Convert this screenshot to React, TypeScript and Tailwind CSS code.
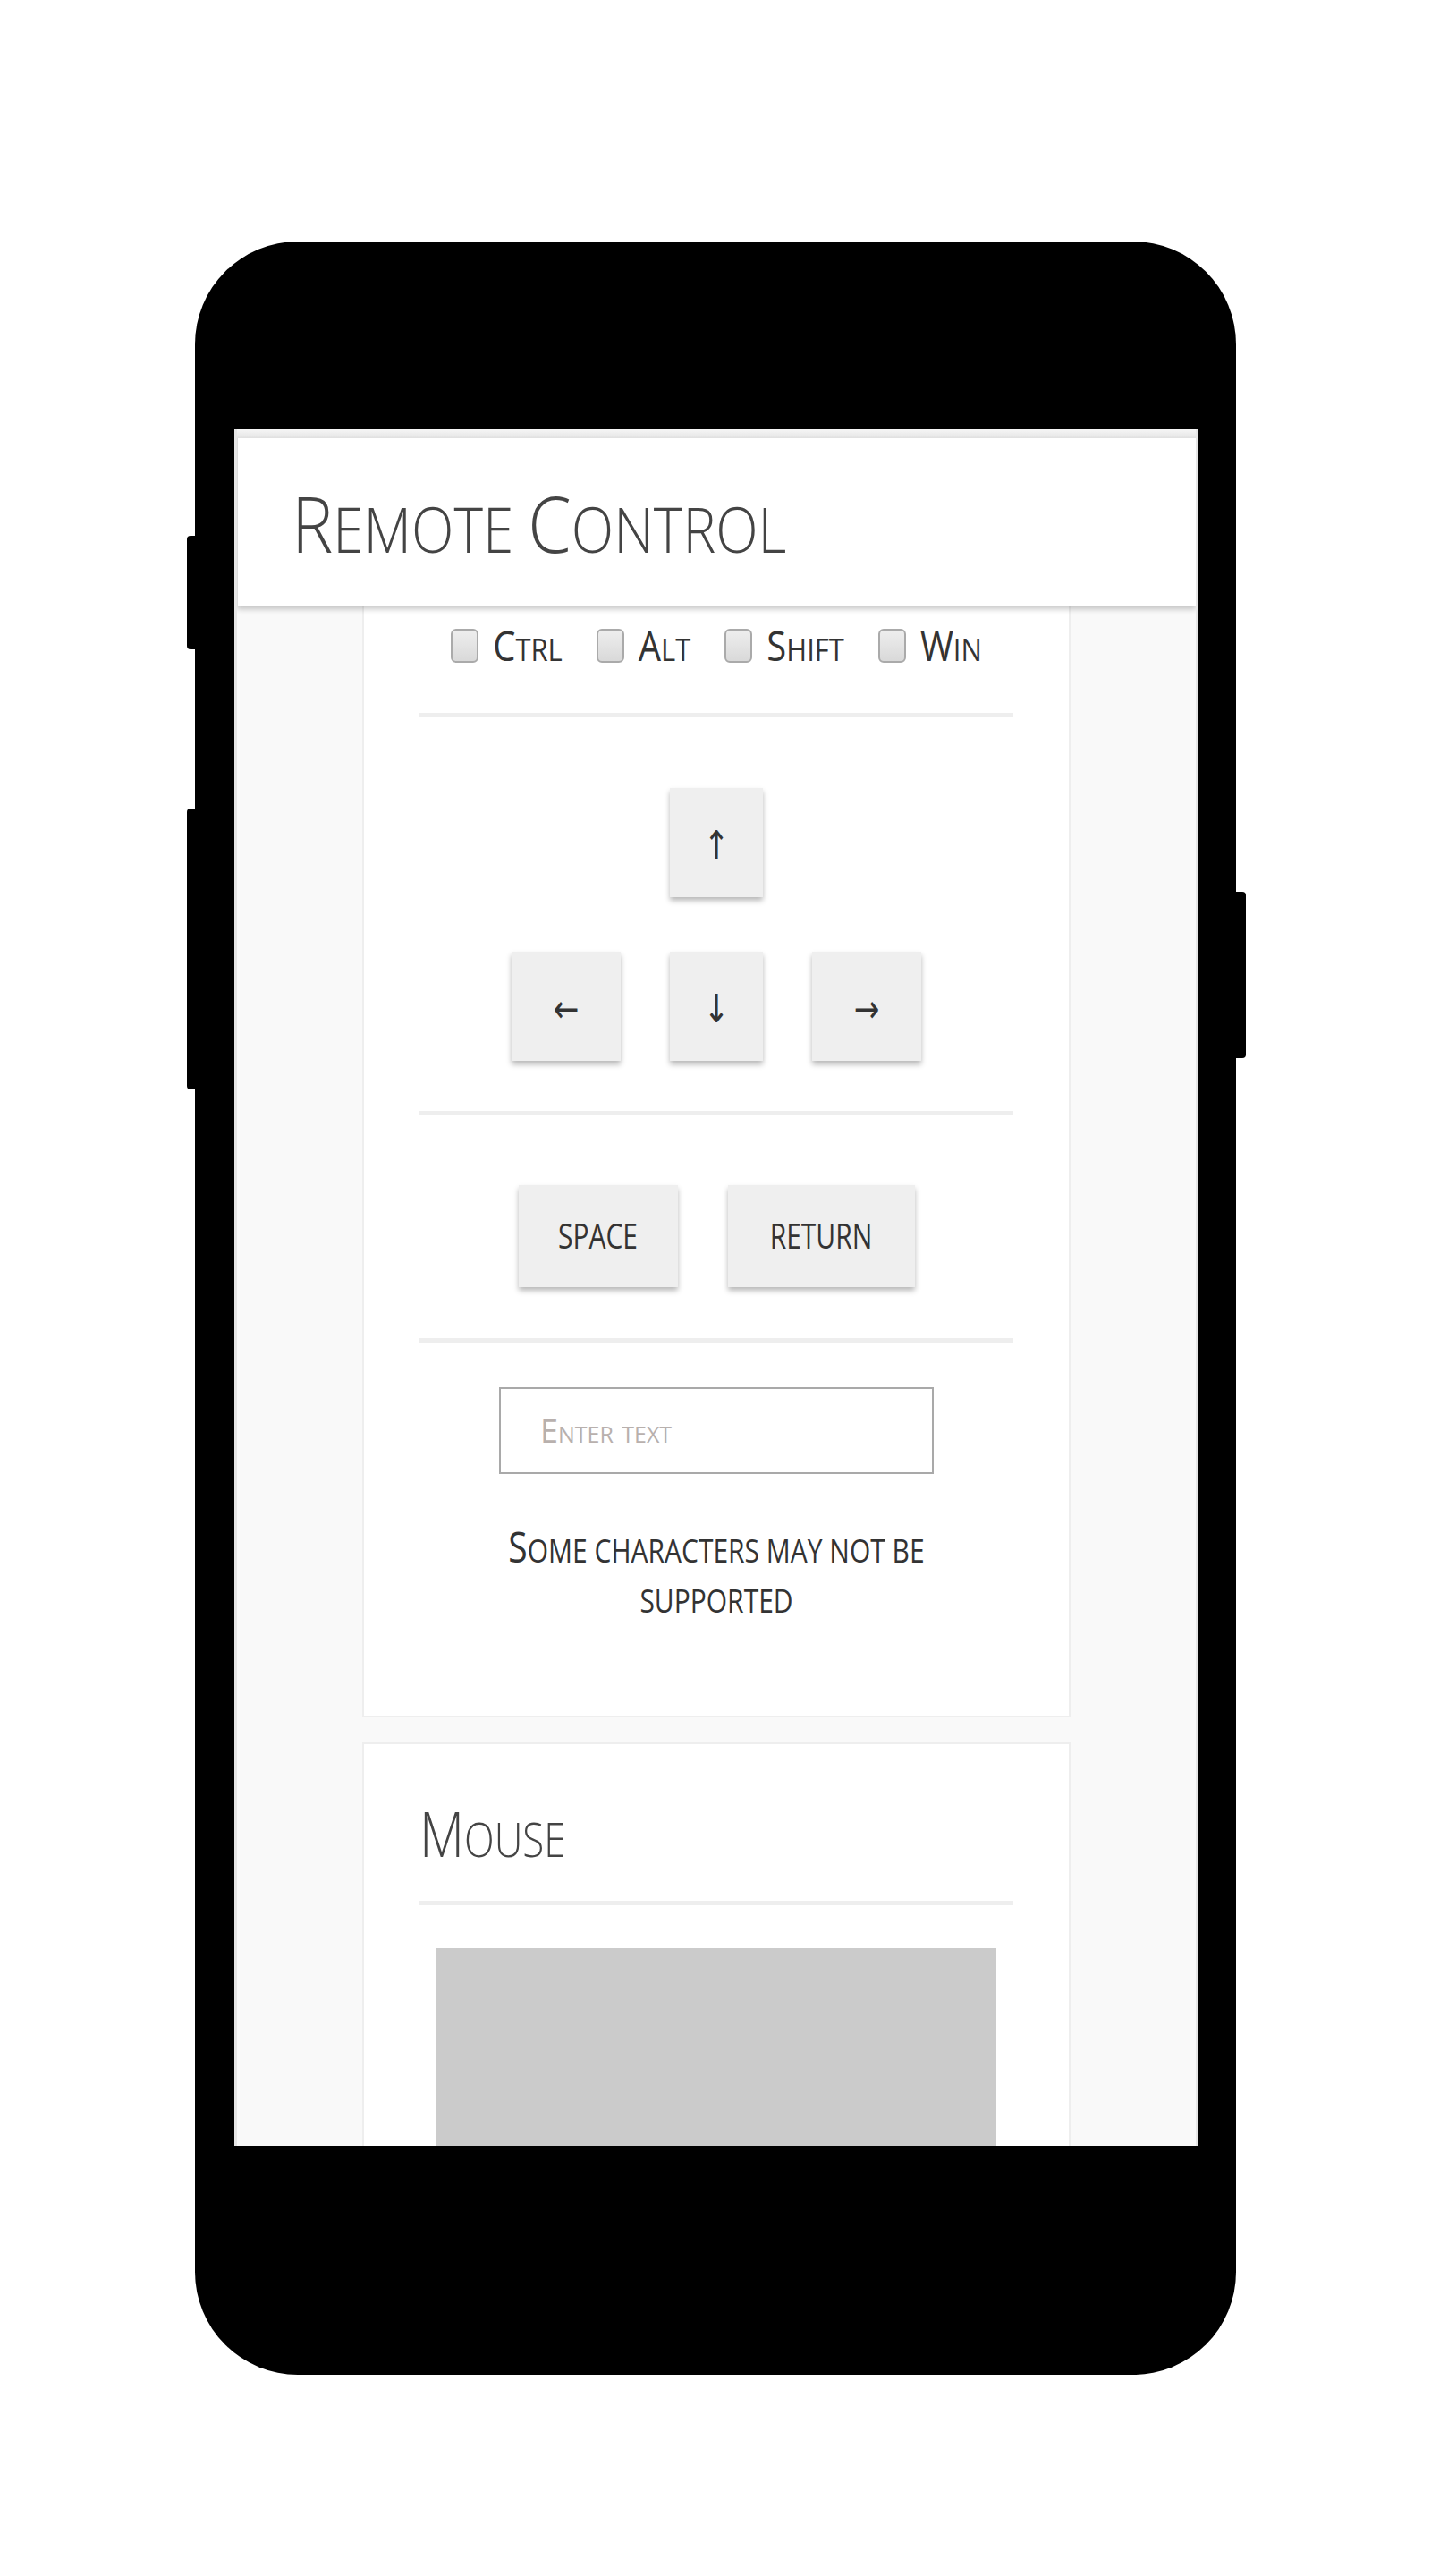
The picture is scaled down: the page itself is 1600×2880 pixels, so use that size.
import React from 'react';

// fake small caps: capitals keep the big size, everything else becomes smaller capitals.
// the mock-up screen is stretched a bit vertically, so the glyphs get a scale-y too.
const SC = ({ text, big, small, stretch }: { text: string; big: string; small: string; stretch: string }) => {
  const parts = text.match(/[A-Z]+|[^A-Z]+/g) ?? [];
  return (
    <span className={`inline-block whitespace-pre ${stretch}`}>
      {parts.map((p, i) =>
        /[A-Z]/.test(p[0]) ? (
          <span key={i} className={big}>{p}</span>
        ) : (
          <span key={i} className={small}>{p.toUpperCase()}</span>
        )
      )}
    </span>
  );
};

const SANS = "font-['Open_Sans',Roboto,sans-serif]";
const ARROW = "font-['DejaVu_Sans_Condensed','DejaVu_Sans',sans-serif]";

const Divider = () => <div className="h-[5px] bg-[#eeeeee]" />;

const Check = ({ label }: { label: string }) => (
  <label className="flex items-center gap-[16px] h-[38px]">
    <span className="w-[31px] h-[38px] rounded-[6px] border-2 border-[#aaaaaa] bg-linear-to-b from-[#eeeeee] to-[#d9d9d9]" />
    <span className={`${SANS} text-[#333] leading-none`}>
      <SC text={label} big="text-[40px]" small="text-[31px]" stretch="scale-y-[1.12]" />
    </span>
  </label>
);

const Key = ({ children, w }: { children: React.ReactNode; w: string }) => (
  <button className={`${w} h-[122px] flex items-center justify-center pt-[6px] bg-[#efefef] text-[#333] shadow-[0_4px_6px_rgba(0,0,0,0.28)]`}>
    <span className="inline-block scale-y-[1.15]">{children}</span>
  </button>
);

const Line = ({ text }: { text: string }) => (
  <div className="h-[61px] flex items-center justify-center leading-none">
    <SC text={text} big="text-[39px]" small="text-[30px]" stretch="scale-y-[1.2]" />
  </div>
);

export default function App() {
  return (
    <div className="min-h-[2880px] bg-white pt-[270px]">
      <div className="relative mx-auto w-[1164px] h-[2385px] bg-black rounded-[115px] pt-[210px] pl-[44px] pr-[42px]">
        {/* side buttons */}
        <div className="absolute left-[-9px] top-[329px] w-[9px] h-[127px] bg-black rounded-l-[4px]" />
        <div className="absolute left-[-9px] top-[634px] w-[9px] h-[314px] bg-black rounded-l-[4px]" />
        <div className="absolute right-[-11px] top-[727px] w-[11px] h-[186px] bg-black rounded-r-[4px]" />

        {/* screen */}
        <div className="h-[1919px] bg-[#f9f9f9] border-x-[3px] border-[#e6e6e6] overflow-hidden flex flex-col">
          <div className="h-[10px] bg-linear-to-b from-[#f6f6f6] to-[#e4e4e4] shrink-0" />
          <header className="relative z-10 h-[187px] shrink-0 bg-white border-l border-[#dddddd] shadow-[0_4px_6px_rgba(0,0,0,0.22)] flex items-center pl-[60px]">
            <h1 className={`${SANS} font-light text-[#444] leading-none`}>
              <SC text="Remote Control" big="text-[78px]" small="text-[62px]" stretch="scale-y-[1.12]" />
            </h1>
          </header>

          <div className="flex flex-col items-center gap-[28px]">
            {/* keyboard card */}
            <section className="w-[792px] -mt-[40px] bg-white border-2 border-[#eeeeee] px-[62px] pt-[64px] pb-[98px]">
              <div className="flex justify-center gap-[38px]">
                <Check label="Ctrl" />
                <Check label="Alt" />
                <Check label="Shift" />
                <Check label="Win" />
              </div>

              <div className="mt-[56px]">
                <Divider />
              </div>

              <div className={`${ARROW} text-[38px] leading-none flex flex-col items-center gap-[61px] pt-[79px] pb-[56px]`}>
                <Key w="w-[104px]">↑</Key>
                <div className="flex gap-[55px]">
                  <Key w="w-[122px]">←</Key>
                  <Key w="w-[104px]">↓</Key>
                  <Key w="w-[122px]">→</Key>
                </div>
              </div>

              <Divider />

              <div className={`${SANS} flex justify-center gap-[56px] pt-[78px] pb-[57px]`}>
                <button className="w-[178px] h-[114px] bg-[#efefef] text-[#333] text-[30px] leading-none shadow-[0_4px_6px_rgba(0,0,0,0.28)]">
                  <span className="inline-block scale-y-[1.25]">SPACE</span>
                </button>
                <button className="w-[209px] h-[114px] bg-[#efefef] text-[#333] text-[30px] leading-none shadow-[0_4px_6px_rgba(0,0,0,0.28)]">
                  <span className="inline-block scale-y-[1.25]">RETURN</span>
                </button>
              </div>

              <Divider />

              <div className="flex flex-col items-center pt-[50px]">
                <input
                  type="text"
                  placeholder="Enter text"
                  className={`${SANS} w-[486px] h-[97px] border-2 border-[#a9a9a9] pl-[44px] text-[36px] [font-variant:small-caps] text-[#333] placeholder:text-[#b8b0ad] outline-none`}
                />
                <div className={`${SANS} mt-[50px] text-[#333]`}>
                  <Line text="Some characters may not be" />
                  <Line text="supported" />
                </div>
              </div>
            </section>

            {/* mouse card */}
            <section className="w-[792px] bg-white border-2 border-[#eeeeee] px-[62px] pt-[62px] h-[600px]">
              <h2 className={`${SANS} font-light text-[#444] h-[73px] flex items-center leading-none`}>
                <SC text="Mouse" big="text-[58px]" small="text-[44px]" stretch="scale-y-[1.22]" />
              </h2>
              <div className="mt-[40px]">
                <Divider />
              </div>
              <div className="mx-[19px] mt-[48px] h-[400px] bg-[#cbcbcb]" />
            </section>
          </div>
        </div>
      </div>
    </div>
  );
}
